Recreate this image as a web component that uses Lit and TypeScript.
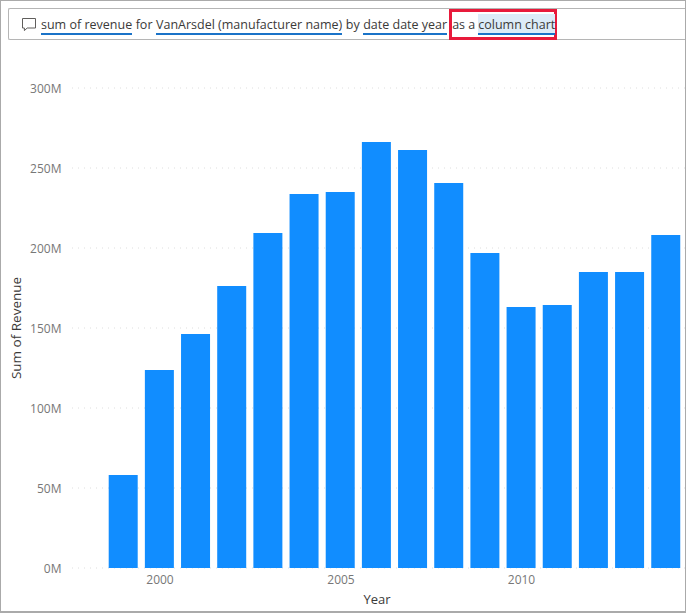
import { LitElement, css, html, svg } from "lit";
import { customElement } from "lit/decorators.js";

const BASELINE = 568;
const tops = [475, 370, 334, 286, 233, 194, 192, 142, 150, 183, 253, 307, 305, 272, 272, 235];
const gridLines = [
  { y: 88, label: "300M" },
  { y: 168, label: "250M" },
  { y: 248, label: "200M" },
  { y: 328, label: "150M" },
  { y: 408, label: "100M" },
  { y: 488, label: "50M" },
  { y: 568, label: "0M" },
];
const years = [
  { x: 160, label: "2000" },
  { x: 341, label: "2005" },
  { x: 521.5, label: "2010" },
];

@customElement("app-root")
export class AppRoot extends LitElement {
  render() {
    return html`<div class="frame">
      <div class="query">
        <svg class="bubble" width="16" height="16" viewBox="0 0 16 16">
          <path
            d="M1.5 2.5h13v9.5H6.2L3.4 14.6V12H1.5z"
            fill="none"
            stroke="#605e5c"
            stroke-width="1"
            stroke-linejoin="round"
          />
        </svg>
        <span class="term">sum of revenue</span>
        <span class="word">for</span>
        <span class="term">VanArsdel (manufacturer name)</span>
        <span class="word">by</span>
        <span class="term">date date year</span>
        <span class="callout">
          <span class="word lead">as a</span>
          <span class="term picked">column chart</span>
        </span>
      </div>
      <svg class="chart" width="684" height="570" viewBox="1 40 684 570">
        ${gridLines.map(
          (g) => svg`<line x1="72" x2="685" y1=${g.y} y2=${g.y} class="grid" />
            <text x="61.5" y=${g.y + 4.5} text-anchor="end" class="tick">${g.label}</text>`,
        )}
        ${tops.map(
          (top, i) =>
            svg`<rect x=${108.7 + i * 36.17} y=${top} width="29" height=${BASELINE - top} class="bar" />`,
        )}
        ${years.map(
          (y) => svg`<text x=${y.x} y="584" text-anchor="middle" class="tick">${y.label}</text>`,
        )}
        <text x="377" y="604" text-anchor="middle" class="axis">Year</text>
        <text
          x="0"
          y="0"
          transform="translate(21 328) rotate(-90)"
          text-anchor="middle"
          class="axis tall"
        >
          Sum of Revenue
        </text>
      </svg>
    </div>`;
  }

  static styles = css`
    :host {
      display: block;
      width: 686px;
      height: 613px;
      font-family: "Open Sans", "Noto Sans", sans-serif;
    }

    .frame {
      box-sizing: border-box;
      width: 686px;
      height: 613px;
      padding-top: 7px;
      border: 1px solid #aaa;
      border-bottom-width: 2px;
      background: #fff;
    }

    .query {
      box-sizing: border-box;
      display: flex;
      align-items: center;
      height: 32px;
      margin-left: 7px;
      padding-left: 12px;
      border: 1px solid #b5b5b5;
      border-right: none;
      border-radius: 2px 0 0 2px;
      font-size: 12.5px;
      color: #3b3a39;
      white-space: nowrap;
    }

    .bubble {
      flex: none;
      margin-right: 4px;
    }

    .word {
      margin: 0 3.5px;
    }

    .lead {
      margin: 0 3px 0 0;
    }

    .term {
      border-bottom: 2px solid #1a73c8;
      line-height: 17px;
      padding-top: 2px;
    }

    .callout {
      display: flex;
      align-items: center;
      align-self: flex-start;
      box-sizing: border-box;
      width: 108px;
      height: 31px;
      margin: 0 0 -1px 2px;
      border: 3px solid #e81a3b;
    }

    .picked {
      background: #dcebf8;
    }

    .chart {
      display: block;
    }

    .grid {
      stroke: #dedede;
      stroke-width: 1;
      stroke-dasharray: 1 5;
    }

    .bar {
      fill: #118dff;
    }

    .tick {
      font-size: 12px;
      fill: #777;
    }

    .axis {
      font-size: 13px;
      fill: #3b3a39;
    }

    .tall {
      font-size: 13.5px;
    }
  `;
}

declare global {
  interface HTMLElementTagNameMap {
    "app-root": AppRoot;
  }
}
